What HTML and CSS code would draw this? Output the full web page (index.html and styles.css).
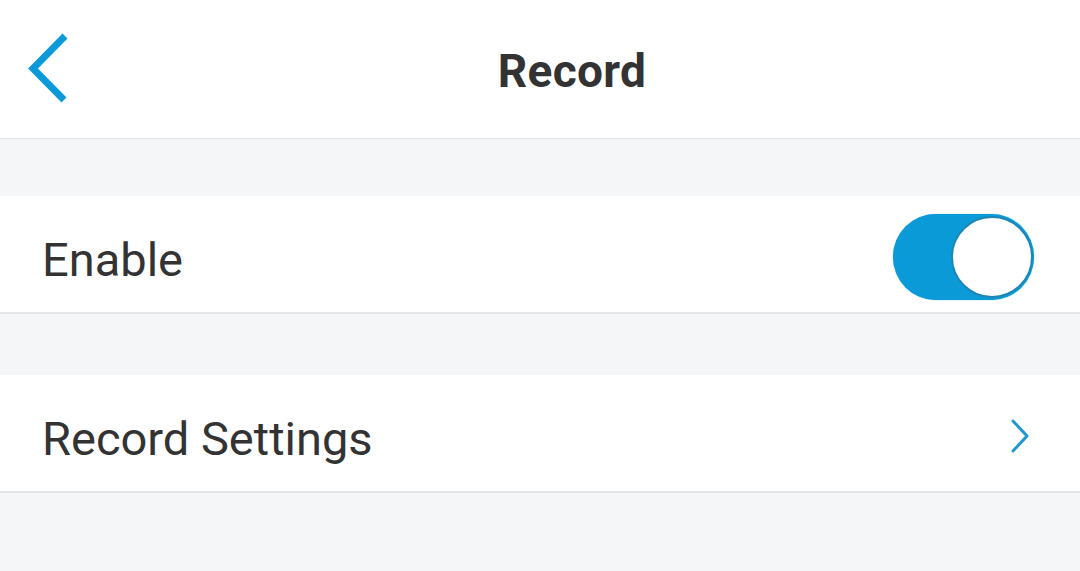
FILE: index.html
```html
<!DOCTYPE html>
<html>
<head>
<meta charset="utf-8">
<link rel="stylesheet" href="styles.css">
</head>
<body>
<div class="app">
  <header class="nav">
    <button class="back" aria-label="Back">
      <svg width="46" height="72" viewBox="0 0 46 72"><path d="M41 3 L9 35.5 L40 67" fill="none" stroke="#0b9ad9" stroke-width="7" stroke-linecap="butt"/></svg>
    </button>
    <h1 class="title">Record</h1>
  </header>
  <div class="gap gap-1"></div>
  <div class="row">
    <span class="label">Enable</span>
    <div class="toggle"><div class="knob"></div></div>
  </div>
  <div class="gap gap-2"></div>
  <div class="row">
    <span class="label">Record Settings</span>
    <svg class="chev" width="22" height="36" viewBox="0 0 22 36"><path d="M4 3 L18 18 L4 33" fill="none" stroke="#1f98d2" stroke-width="3" stroke-linecap="round" stroke-linejoin="round"/></svg>
  </div>
</div>
</body>
</html>
```
FILE: styles.css
```css
* { box-sizing: border-box; }
html, body { margin: 0; padding: 0; }
body {
  width: 1080px;
  height: 571px;
  overflow: hidden;
  background: #f5f6f8;
  font-family: Roboto, "Liberation Sans", sans-serif;
  color: #333333;
}
.nav {
  height: 139px;
  background: #ffffff;
  border-bottom: 1px solid #e2e2e4;
  display: flex;
  align-items: center;
  justify-content: center;
  position: relative;
}
.back {
  position: absolute;
  left: 24px;
  top: 33px;
  padding: 0;
  border: 0;
  background: none;
  display: flex;
}
.title {
  margin: 0;
  font-size: 46px;
  font-weight: 700;
  color: #333333;
  letter-spacing: 0.3px;
  padding-left: 64px;
  padding-top: 4px;
}
.gap-1 { height: 57px; }
.gap-2 { height: 61px; }
.row {
  height: 118px;
  background: #ffffff;
  border-bottom: 2px solid #e4e5e7;
  display: flex;
  align-items: center;
  justify-content: space-between;
  padding: 0 46px 0 42px;
}
.label {
  font-size: 47px;
  font-weight: 400;
  color: #333333;
  padding-top: 10px;
}
.toggle {
  width: 141px;
  height: 86px;
  border-radius: 43px;
  background: #0a9ad8;
  position: relative;
  margin-top: 6px;
  box-shadow: 0 0 1px #0a9ad8;
}
.knob {
  position: absolute;
  right: 1px;
  top: 2px;
  width: 82px;
  height: 82px;
  border-radius: 50%;
  background: #ffffff;
  border: 2px solid #1e86b4;
}
.chev { margin-right: 3px; margin-top: 6px; }
```
